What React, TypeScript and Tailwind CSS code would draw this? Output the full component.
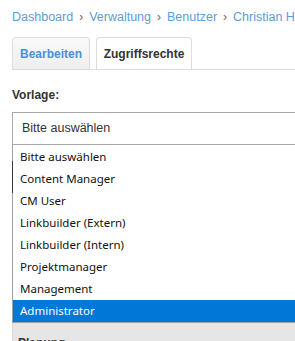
const crumbs = ["Dashboard", "Verwaltung", "Benutzer", "Christian Hartmann"]

const options = [
  "Bitte auswählen",
  "Content Manager",
  "CM User",
  "Linkbuilder (Extern)",
  "Linkbuilder (Intern)",
  "Projektmanager",
  "Management",
  "Administrator",
]

export default function App() {
  const selected = "Administrator"

  return (
    <div className="w-[295px] h-[341px] overflow-hidden bg-white font-['Liberation_Sans',Arial,sans-serif] text-[#333]">
      <div className="w-[700px] pl-3">
        {/* Breadcrumb */}
        <div className="flex items-center gap-[6px] pt-[7px] h-[27px] text-[12.5px] leading-[20px] whitespace-nowrap">
          {crumbs.map((c, i) => (
            <span key={c} className="flex items-center gap-[6px]">
              <span className="text-[#5b9dd9]">{c}</span>
              {i < crumbs.length - 1 && <span className="text-[#666] text-[12px]">›</span>}
            </span>
          ))}
        </div>

        {/* Tabs */}
        <div className="mt-[10px] flex items-end gap-[6px] border-b border-[#ddd] h-[33px]">
          <button className="h-[32px] w-[78px] rounded-t-[4px] border border-b-0 border-[#ddd] bg-gradient-to-b from-[#fafafa] to-[#eeeeee] text-[12px] font-bold text-[#4a90d9]">
            Bearbeiten
          </button>
          <button className="h-[32px] w-[96px] rounded-t-[4px] border border-b-0 border-[#ddd] bg-white text-[12px] font-bold text-[#333]">
            Zugriffsrechte
          </button>
        </div>

        {/* Vorlage */}
        <div className="mt-[17px] text-[12px] leading-[16px] font-bold">Vorlage:</div>

        <div className="relative mt-[9px]">
          <div className="h-[33px] border border-[#aaa] flex items-center pl-[9px] text-[12.5px]">
            Bitte auswählen
          </div>

          {/* Open dropdown list */}
          <div className="relative border-l border-b border-[#a0a0a0] pt-px bg-white font-['Noto_Sans',sans-serif] text-[11.5px] text-[#111]">
            <div className="absolute -left-px top-[16px] h-[32px] w-px bg-[#3c3c3c]" />
            {options.map((o) => (
              <div
                key={o}
                className={
                  o === selected
                    ? "h-[22px] flex items-center pl-[7px] bg-[#0078d7] text-white"
                    : "h-[22px] flex items-center pl-[7px]"
                }
              >
                {o}
              </div>
            ))}
          </div>

          {/* Next section header */}
          <div className="h-[30px] bg-[#e6e6e6] border-l border-[#d6d6d6] pl-[5px] pt-[12px] text-[12px] leading-[16px] font-bold">
            Planung
          </div>
        </div>
      </div>
    </div>
  )
}
